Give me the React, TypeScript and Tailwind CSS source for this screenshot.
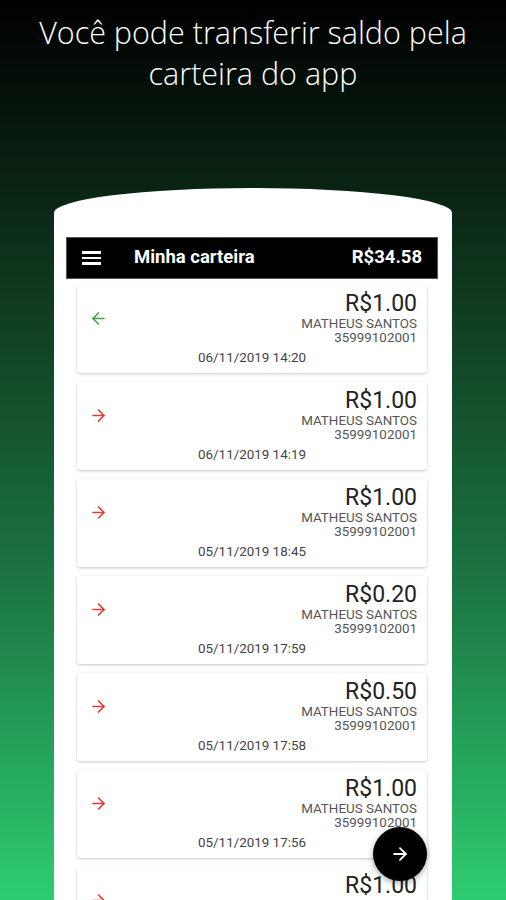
import { ArrowLeft, ArrowRight } from "lucide-react";

type Tx = { amount: string; date: string; incoming?: boolean };

const txs: Tx[] = [
  { amount: "R$1.00", date: "06/11/2019 14:20", incoming: true },
  { amount: "R$1.00", date: "06/11/2019 14:19" },
  { amount: "R$1.00", date: "05/11/2019 18:45" },
  { amount: "R$0.20", date: "05/11/2019 17:59" },
  { amount: "R$0.50", date: "05/11/2019 17:58" },
  { amount: "R$1.00", date: "05/11/2019 17:56" },
  { amount: "R$1.00", date: "05/11/2019 17:50" },
];

function TxCard({ tx }: { tx: Tx }) {
  return (
    <div className="relative h-[88px] shrink-0 rounded-[3px] bg-white shadow-[0_1px_3px_rgba(0,0,0,0.22)]">
      <div className="absolute left-[12px] top-[24px]">
        {tx.incoming ? (
          <ArrowLeft className="h-[19px] w-[19px] text-[#43a047]" strokeWidth={2} />
        ) : (
          <ArrowRight className="h-[19px] w-[19px] text-[#e53935]" strokeWidth={2} />
        )}
      </div>
      <div className="flex flex-col items-end pr-[10px] pt-[5px] font-['Roboto',sans-serif]">
        <div className="text-[23px] leading-[27px] text-[#222]">{tx.amount}</div>
        <div className="text-[13.4px] leading-[14px] text-[#555]">MATHEUS SANTOS</div>
        <div className="text-[13.4px] leading-[14px] text-[#555]">35999102001</div>
      </div>
      <div className="mt-[6px] text-center font-['Roboto',sans-serif] text-[13.4px] leading-[14px] text-[#444]">
        {tx.date}
      </div>
    </div>
  );
}

export default function App() {
  return (
    <div className="flex h-[900px] w-full flex-col items-center overflow-hidden bg-[linear-gradient(to_bottom,#000_0%,#06140b_12%,#0f3a1f_33%,#1c7843_66%,#2ecc71_100%)]">
      <h1 className="pt-[12px] text-center font-['Open_Sans',sans-serif] text-[30.5px] font-light leading-[41px] text-white">
        Você pode transferir saldo pela
        <br />
        carteira do app
      </h1>

      {/* phone */}
      <div className="relative mt-[94px] flex w-[398px] flex-1 flex-col overflow-hidden rounded-t-[50%_25px] bg-white pl-[12px] pr-[14px] pt-[49px]">
        <div className="flex h-[42px] shrink-0 items-center border border-[#555] bg-black px-[15px] font-['Roboto',sans-serif] text-white">
          <div className="flex w-[19px] flex-col gap-[3px]">
            <span className="h-[2.5px] bg-white" />
            <span className="h-[2.5px] bg-white" />
            <span className="h-[2.5px] bg-white" />
          </div>
          <span className="ml-[33px] text-[18.5px] font-bold">Minha carteira</span>
          <span className="ml-auto text-[18.5px] font-bold">R$34.58</span>
        </div>

        <div className="flex flex-col gap-[9px] px-[11px] pt-[6px]">
          {txs.map((tx, i) => (
            <TxCard key={i} tx={tx} />
          ))}
        </div>

        <button className="absolute left-[319px] top-[639px] flex h-[54px] w-[54px] items-center justify-center rounded-full bg-black shadow-[0_2px_6px_rgba(0,0,0,0.35)]">
          <ArrowRight className="h-[20px] w-[20px] text-white" strokeWidth={2.2} />
        </button>
      </div>
    </div>
  );
}
